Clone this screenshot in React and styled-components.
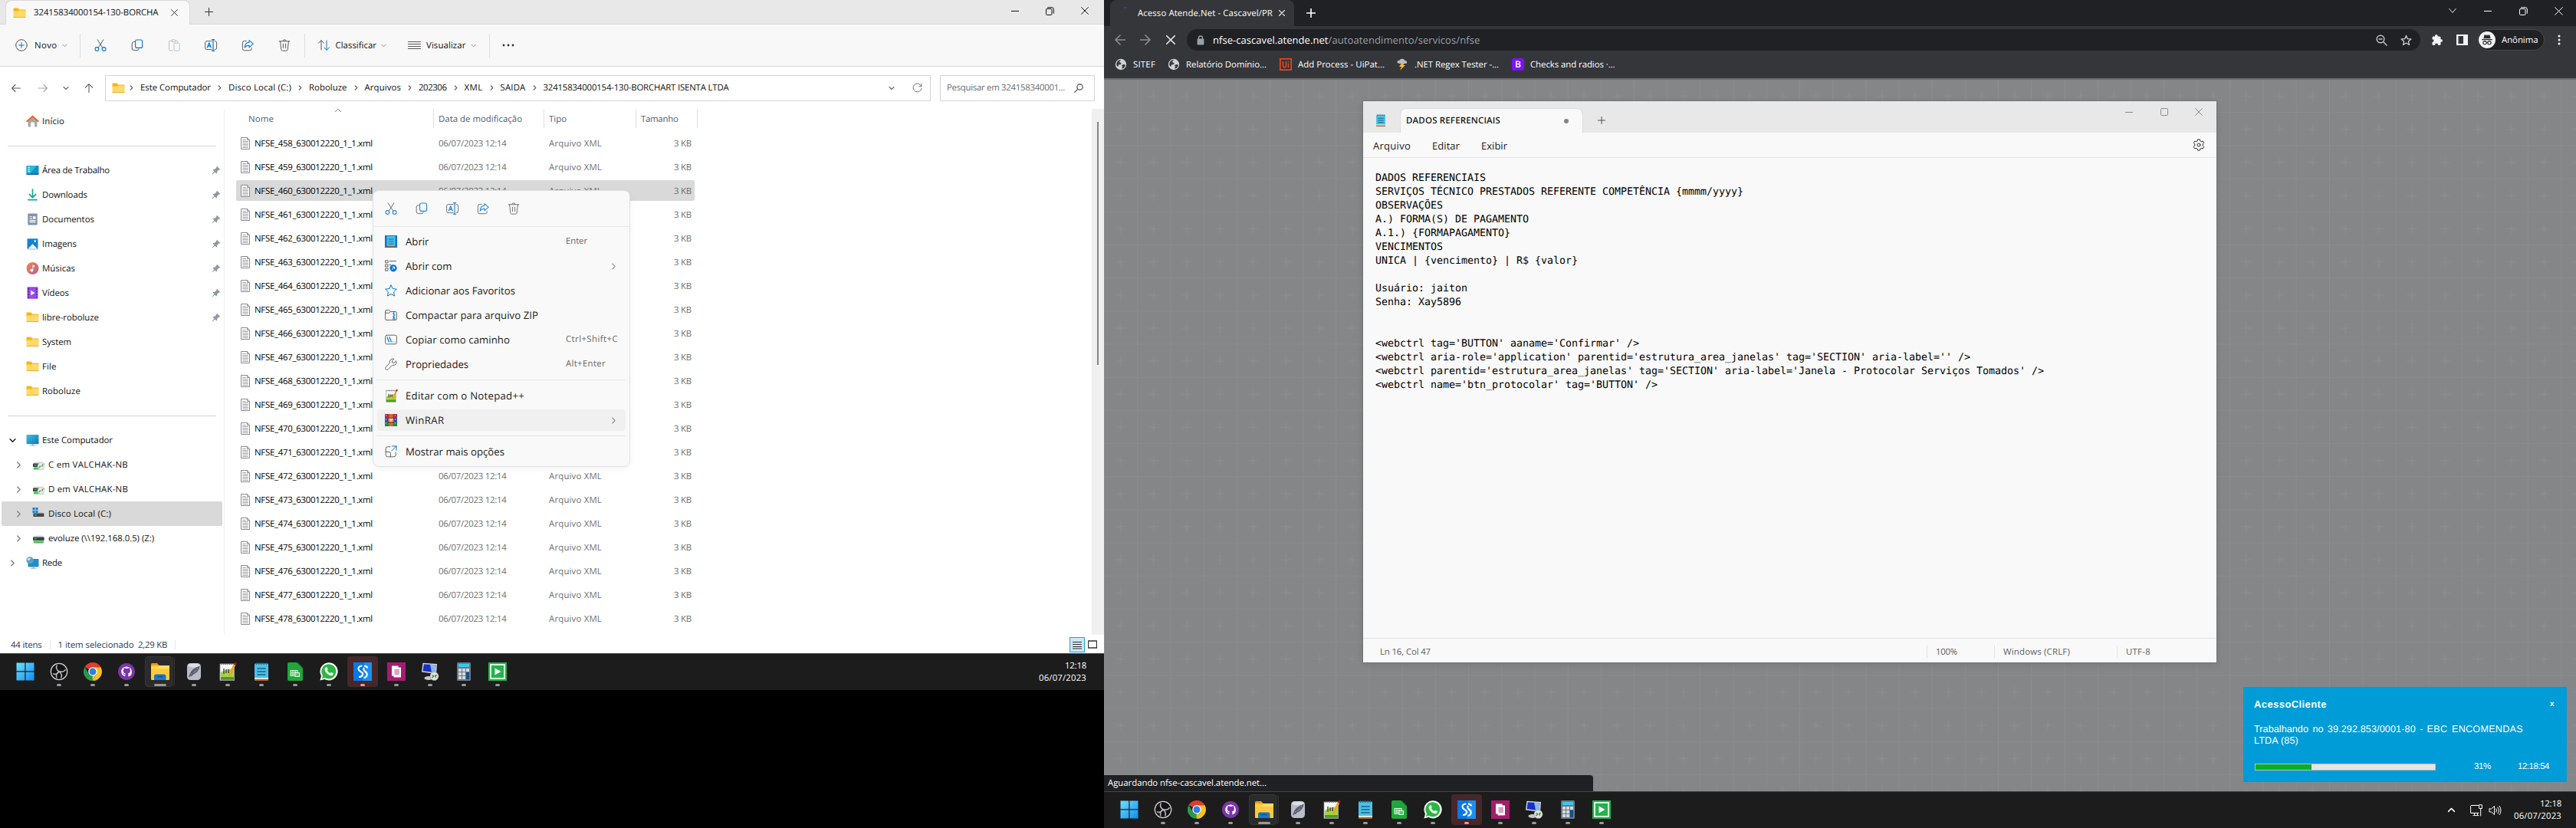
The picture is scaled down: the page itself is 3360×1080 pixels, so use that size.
import React, { useLayoutEffect, useRef, useState } from 'react';
import styled, { createGlobalStyle, css } from 'styled-components';

const UI = '"Open Sans", "Noto Sans", sans-serif';

const Global = createGlobalStyle`
  * { box-sizing: border-box; }
  html, body { margin: 0; padding: 0; background: #000; }
  body { width: 3360px; height: 1080px; overflow: hidden; font-family: ${UI}; font-size: 11.4px; text-rendering: geometricPrecision; }
  svg { display: block; flex: none; }
`;

/* ---------- text ---------- */
const Text = styled.span`
  display: inline-block;
  flex: none;
  width: max-content;
  white-space: pre;
  font-size: ${p => p.$s || 11.4}px;
  font-weight: ${p => p.$b || 400};
  color: ${p => p.$c || 'inherit'};
  line-height: ${p => p.$lh || 16}px;
  padding-top: ${p => (p.$lh ? 0 : 1)}px;
`;

/* Tracks a label so that it spans the given advance width. */
function Label({ w, s, c, b, lh, children }) {
  const ref = useRef(null);
  const [ls, setLs] = useState(0);
  useLayoutEffect(() => {
    if (!w) return;
    const natural = ref.current.getBoundingClientRect().width;
    setLs((w - natural) / String(children).length);
  }, []);
  return <Text ref={ref} $s={s} $c={c} $b={b} $lh={lh} style={ls ? { letterSpacing: ls + 'px' } : undefined}>{children}</Text>;
}

/* ---------- primitives ---------- */
const Slot = styled.div`
  width: ${p => p.$w}px;
  flex: none;
  display: flex;
  align-items: center;
  justify-content: ${p => p.$j || 'center'};
`;
const Gap = styled.div`flex: none; width: ${p => p.$w}px;`;
const Spacer = styled.div`flex: 1;`;
const VLine = styled.div`flex: none; width: 1px; height: ${p => p.$h}px; background: ${p => p.$c || '#dedede'};`;

const Desktop = styled.main`display: flex; width: 3360px; height: 1080px; background: #000; overflow: hidden;`;
const LeftScreen = styled.section`width: 1440px; height: 900px; display: flex; flex-direction: column; position: relative; background: #fff;`;
const RightScreen = styled.section`width: 1920px; height: 1080px; display: flex; flex-direction: column; position: relative;`;

/* ---------- line icons ---------- */
const S = ({ w = 16, h, vb, children, sw = 1, c = 'currentColor' }) => (
  <svg width={w} height={h || w} viewBox={vb || `0 0 ${w} ${h || w}`} fill="none" stroke={c} strokeWidth={sw} strokeLinecap="round" strokeLinejoin="round">{children}</svg>
);
const Chev = ({ d = 'down', c = '#777', z = 8, sw = 1.1 }) => (
  <S w={z} vb="0 0 8 8" c={c} sw={sw}>
    <path d={{ down: 'M1 2.5L4 5.5L7 2.5', right: 'M2.5 1L5.5 4L2.5 7', up: 'M.5 5.7L4 2.2L7.5 5.7' }[d]} />
  </S>
);
const Cross = ({ z = 10, c = '#222', sw = 1 }) => <S w={z} vb="0 0 10 10" c={c} sw={sw}><path d="M.6 .6L9.4 9.4M9.4 .6L.6 9.4" /></S>;
const Plus = ({ z = 11, c = '#333', sw = 1 }) => <S w={z} vb="0 0 11 11" c={c} sw={sw}><path d="M5.5 .5V10.5M.5 5.5H10.5" /></S>;
const Minus = ({ c = '#111' }) => <S w={10} vb="0 0 10 10" c={c}><path d="M0 5.5H10" /></S>;
const Restore = ({ c = '#111' }) => <S w={11} vb="0 0 11 11" c={c}><rect x=".5" y="2.5" width="7.5" height="8" rx="1.2" /><path d="M2.6 .7H8.2Q10.3 .7 10.3 3V8.3" /></S>;
const BLUE = '#0078d4';
const Cut = () => <S w={16} c="#5c5c5c"><path d="M4.2 .8L10.6 11M11.8 .8L5.4 11" /><circle cx="3.4" cy="13" r="2.4" stroke={BLUE} strokeWidth="1.1" /><circle cx="12.6" cy="13" r="2.4" stroke={BLUE} strokeWidth="1.1" /></S>;
const Copy = () => <S w={16} c="#5c5c5c"><path d="M4.6 3.6H3.6Q1.2 3.6 1.2 6V12Q1.2 14.6 3.8 14.6H8Q10 14.6 10.2 12.8" /><rect x="5.6" y="1" width="9" height="10.4" rx="2" stroke={BLUE} strokeWidth="1.1" /></S>;
const Paste = () => <S w={16} c="#bdbdbd"><path d="M5 2.2H3Q1.6 2.2 1.6 3.6V13.6Q1.6 15 3 15H6M10 2.2H11.4Q12.8 2.2 12.8 3.6V4.4" /><rect x="5" y=".8" width="5" height="2.8" rx="1.2" /><rect x="8" y="5.2" width="7.2" height="10" rx="1.4" stroke="#9fcbee" /></S>;
const Rename = () => <S w={18} h={16} c="#5c5c5c"><path d="M10 2.6H4Q1.6 2.6 1.6 5V11.2Q1.6 13.6 4 13.6H10M14 2.6H14.4Q16.6 2.6 16.6 5V11.2Q16.6 13.6 14.4 13.6H14" /><path d="M4.4 11L6.8 4.8L9.2 11M5.2 9H8.4" stroke={BLUE} strokeWidth="1.3" /><path d="M12 .8V15.2M10.4 .7H13.6M10.4 15.3H13.6" stroke={BLUE} strokeWidth="1.2" /></S>;
const Share = () => <S w={16} c="#5c5c5c"><path d="M6.2 2.4H3.6Q1.4 2.4 1.4 4.8V12.4Q1.4 14.8 3.6 14.8H10.8Q13.2 14.8 13.2 12.4V11.6" /><path d="M10 1.6L15.2 6.2L10 10.8V8.2Q6.2 8 4.2 11Q4.6 4.6 10 4.2Z" stroke={BLUE} strokeWidth="1.1" /></S>;
const Trash = () => <S w={16} c="#5c5c5c"><path d="M1.2 2.8H14.8M5.8 2.6Q6 .8 8 .8Q10 .8 10.2 2.6M2.6 3L3.8 13.6Q4 15.2 5.4 15.2H10.6Q12 15.2 12.2 13.6L13.4 3M6.4 6.2V11.6M9.6 6.2V11.6" /></S>;

/* ---------- colour icons ---------- */
const Folder = () => (
  <svg width="17" height="16" viewBox="0 0 17 16"><path d="M.5 2.6Q.5 1.5 1.6 1.5H6.4L8.4 3.6H15.4Q16.5 3.6 16.5 4.6V7H.5Z" fill="#f5b70f" /><path d="M.5 5.6H6.6L8.6 4.4H16.5V13Q16.5 14 15.5 14H1.5Q.5 14 .5 13Z" fill="#ffd96a" /><path d="M.5 12.4V13Q.5 14 1.5 14H15.5Q16.5 14 16.5 13V12.4Q16.5 13.2 15.5 13.2H1.5Q.5 13.2 .5 12.4Z" fill="#e6a21b" /></svg>
);
const Home = () => (
  <svg width="17" height="16" viewBox="0 0 17 16"><path d="M2.6 6.5L8.5 2L14.4 6.5V15Q14.4 15.5 13.8 15.5H11V11Q11 9.6 9.6 9.6H7.4Q6 9.6 6 11V15.5H3.2Q2.6 15.5 2.6 15Z" fill="#a8a8a8" /><path d="M1.2 8.2L8.5 1.6L15.8 8.2" fill="none" stroke="#e0671b" strokeWidth="1.9" strokeLinecap="round" strokeLinejoin="round" /></svg>
);
const DesktopIc = () => (
  <svg width="17" height="16" viewBox="0 0 17 16"><rect x=".5" y="2" width="16" height="12" rx="1" fill="#1492c8" /><path d="M.5 3Q.5 2 1.5 2H14L4 14H1.5Q.5 14 .5 13Z" fill="#2db7d9" /><path d="M3 4.5h1.6M3 7h1.6M3 9.5h1.6" stroke="#fff" strokeWidth="1.4" /><path d="M.5 12.4h16V13q0 1-1 1H1.5q-1 0-1-1Z" fill="#0b5f9b" /></svg>
);
const DownIc = () => <S w={17} h={16} c="#1aa98c" sw={1.7}><path d="M8.5 1V11.4M4.4 7.6L8.5 11.6L12.6 7.6M3 14.6H14" /></S>;
const DocIc = () => (
  <svg width="17" height="16" viewBox="0 0 17 16"><rect x="2.3" y=".6" width="12.4" height="15" rx="1" fill="#8094ad" /><path d="M4.6 4.8H8M4.6 7.2H8M4.6 9.6H12.4M4.6 11.6H12.4" stroke="#fff" strokeWidth="1.1" /><rect x="9" y="4.2" width="3.6" height="3.4" fill="#fff" /></svg>
);
const ImgIc = () => (
  <svg width="17" height="16" viewBox="0 0 17 16"><rect x="1.5" y="1.2" width="14" height="14" rx="1.2" fill="#1283d6" /><path d="M2.2 14.8L8.6 8.2L15 14.8Z" fill="#f2faff" /><circle cx="11.8" cy="4.6" r="1.4" fill="#fff" /></svg>
);
const MusicIc = () => (
  <svg width="17" height="16" viewBox="0 0 17 16"><defs><linearGradient id="mus" x1="0" y1="0" x2="1" y2="1"><stop offset="0" stopColor="#f08a4b" /><stop offset="1" stopColor="#b85f98" /></linearGradient></defs><circle cx="8.5" cy="8" r="8" fill="url(#mus)" /><circle cx="7.4" cy="10.6" r="1.9" fill="#fff" /><path d="M8.5 10.8V3.4L11 4.6V6.6L9.3 5.8V10.8Z" fill="#fff" /></svg>
);
const VideoIc = () => (
  <svg width="17" height="16" viewBox="0 0 17 16"><rect x="1.5" y=".2" width="14" height="15.6" rx="1" fill="#9a4be6" /><path d="M3.2 2V14.4M13.8 2V14.4" stroke="#4b1b95" strokeWidth="1.6" strokeDasharray="1.7 2" /><path d="M6.2 4.8L11.4 8L6.2 11.2Z" fill="#fff" /></svg>
);
const PcIc = () => (
  <svg width="17" height="16" viewBox="0 0 17 16"><defs><linearGradient id="pc" x1="0" y1="0" x2="1" y2="1"><stop offset="0" stopColor="#3cc3dd" /><stop offset="1" stopColor="#1272bd" /></linearGradient></defs><rect x=".5" y="1" width="16" height="12.2" rx=".8" fill="url(#pc)" /><path d="M7.6 13.2H9.6V14.8H12.4V15.6H4.8V14.8H7.6Z" fill="#9aa6ae" /></svg>
);
const NetIc = () => (
  <svg width="17" height="16" viewBox="0 0 17 16"><rect x="2.5" y="3" width="14" height="10.4" rx=".8" fill="#1d8fd0" /><path d="M8.6 13.4H10.6V15H13.4V15.8H5.8V15H8.6Z" fill="#9aa6ae" /><circle cx="5" cy="4.8" r="4.6" fill="#5f9fc6" /><path d="M2 2.2Q5 1 6 3Q4.6 5.6 2.2 5Z" fill="#cfe5ef" /></svg>
);
const NetDrive = ({ badge }) => (
  <svg width="17" height="16" viewBox="0 0 17 16"><path d="M3 4.4H13.5L15.6 7H1Z" fill="#dcdfe0" /><rect x="1" y="6.6" width="14.6" height="4.4" rx=".6" fill="#3b4145" /><rect x="3.2" y="8" width="2.2" height="1.4" fill="#3bdc6b" /><path d="M1.8 11.4H15V13.4Q15 14.6 14 14.6H2.8Q1.8 14.6 1.8 13.4Z" fill="#43c653" />{badge && <g><circle cx="11.6" cy="10" r="4.6" fill="#e8eae8" stroke="#b9bdb9" strokeWidth=".5" /><path d="M8.8 12.2L10.6 10.4L9.6 9.6M14.4 7.6L12.6 9.4L13.6 10.4" fill="none" stroke="#43973c" strokeWidth="1.2" /></g>}</svg>
);
const LocalDrive = () => (
  <svg width="17" height="16" viewBox="0 0 17 16"><path d="M.5 0H3.6V3.2H.5ZM4.4 0H7.5V3.2H4.4ZM.5 4H3.6V7.2H.5ZM4.4 4H7.5V7.2H4.4Z" fill="#1184d8" /><path d="M8 5.6H13.4L15.4 8H1.6V7.6H8Z" fill="#c7cacc" /><rect x="1.4" y="7.6" width="14" height="4.4" rx=".6" fill="#43484b" /><rect x="3.6" y="9" width="2" height="1.3" fill="#3bdc6b" /></svg>
);
const Pin = () => (
  <svg width="12" height="12" viewBox="0 0 12 12"><path d="M7 .8L11.2 5L10 5.8L9.4 5.6L7.2 7.8L7 9.8L6.2 10.4L4.2 8.4L1.2 11.2L.6 10.8L3.4 7.6L1.6 5.8L2.2 5L4.2 4.8L6.4 2.6L6.2 2Z" fill="#8d98a3" /></svg>
);
const FileIc = () => (
  <svg width="12" height="16" viewBox="0 0 12 16"><path d="M.5 .5H8.6L11.5 3.4V15.5H.5Z" fill="#fff" stroke="#8b8b8b" /><path d="M8.4 .5V3.6H11.5" fill="none" stroke="#8b8b8b" /><path d="M2.2 3.5H6.8M2.2 5.5H9.8M2.2 7.5H9.8M2.2 9.5H9.8M2.2 11.5H9.8M2.2 13.5H9.8" stroke="#a4a4a4" /></svg>
);
const NotePadIc = ({ w = 18, h = 24 }) => (
  <svg width={w} height={h} viewBox="0 0 18 24"><rect x="0" y="1.6" width="18" height="20.4" rx="1" fill="#4fc0e4" /><path d="M0 20H18V22.2H0Z" fill="#d9e8ee" /><path d="M0 22H18V23.2Q18 24 17 24H1Q0 24 0 23.2Z" fill="#b5611c" /><path d="M2.6 .2V3M5.8 .2V3M9 .2V3M12.2 .2V3M15.4 .2V3" stroke="#1b6d8f" strokeWidth="1.4" /><path d="M3.4 8H14.6M3.4 12H14.6M3.4 16H14.6" stroke="#14668c" strokeWidth="1.6" /></svg>
);
const NppIc = ({ z = 24 }) => (
  <svg width={z} height={z} viewBox="0 0 24 24"><rect x="2" y="2" width="18.6" height="21.4" fill="#fafafa" stroke="#9a9a9a" strokeWidth=".8" /><path d="M3 13Q9 9 20 8V22.8H3Z" fill="#a6d43e" /><path d="M3 19H20V22.8H3Z" fill="#4a9a2c" /><path d="M3.6 2H19" stroke="#666" strokeWidth="2" strokeDasharray="1.2 1.4" /><path d="M7 8V15M10 9V14M13 9V14" stroke="#444" strokeWidth="1.4" /><path d="M21.2 2.2L14 18" stroke="#eea42a" strokeWidth="3" /><path d="M22.6 .4L21.2 3.4" stroke="#96201c" strokeWidth="3" /></svg>
);

/* ---------- taskbar icons ---------- */
const TB = {
  win: <svg width="24" height="24" viewBox="0 0 24 24"><defs><linearGradient id="wn" x1="0" y1="0" x2="1" y2="1"><stop offset="0" stopColor="#6fe0ff" /><stop offset="1" stopColor="#0f8df0" /></linearGradient></defs><path d="M.5 .5H11.3V11.3H.5ZM12.5 .5H23.5V11.3H12.5ZM.5 12.5H11.3V23.5H.5ZM12.5 12.5H23.5V23.5H12.5Z" fill="url(#wn)" /></svg>,
  obs: <svg width="24" height="24" viewBox="0 0 24 24"><circle cx="12" cy="12" r="10.7" fill="#141216" stroke="#cfcfcf" strokeWidth="1.3" /><path d="M9.4 3.6Q6.6 8.6 12.2 11.8Q18.4 13.4 20.4 9.2M12.2 11.8Q7 14.8 9 20.2M12.2 11.8Q17 15.6 14.6 20.4M4.2 14.6Q8.4 17.2 12.2 11.8" fill="none" stroke="#b9b9b9" strokeWidth="1.5" /></svg>,
  chrome: <svg width="24" height="24" viewBox="0 0 24 24"><path d="M12 12L1.6 6A12 12 0 0 1 22.4 6H12Z" fill="#e33b2e" /><path d="M12 6.2H22.5A12 12 0 0 1 12 24L17 15Z" fill="#fcc31e" /><path d="M1.6 6L6.8 15Q9 18 13.6 17.8L12 24A12 12 0 0 1 1.6 6Z" fill="#259b48" /><path d="M12 17L17.300 14.500L12 24Q11 20 12 17Z" fill="#fcc31e" /><circle cx="12" cy="12" r="5.8" fill="#fff" /><circle cx="12" cy="12" r="4.5" fill="#2f7de9" /></svg>,
  github: <svg width="24" height="24" viewBox="0 0 24 24"><circle cx="12" cy="12" r="11" fill="#7c35a8" /><path d="M12 5.4C8 5.4 5.2 8.2 5.2 11.9c0 3 2 5.4 4.7 6.3.3 0 .5-.2.5-.4v-1.6c-2 .4-2.5-.9-2.5-.9-.9-1.6-1.2-1.2-.6-1.3.8 0 1.2.8 1.2.8.7 1.2 1.6.9 2 .7l.4-.9c-1.6-.3-3.2-.9-3.2-3.5 0-.8.3-1.5.8-2-.2-.4-.3-1 .1-2 0 0 .7-.2 2 .8a8 8 0 0 1 3.5 0c1.4-1 2-.8 2-.8.4 1 .2 1.6.1 2 .5.5.8 1.200.8 2 0 2.600-1.600 3.200-3.200 3.500.3.3.6.7.6 1.500v2c0 .2.100.4.5.4A6.700 6.700 0 0 0 18.900 11.900C18.900 8.200 16 5.400 12 5.400Z" fill="#fff" /></svg>,
  explorer: <svg width="26" height="24" viewBox="0 0 26 24"><path d="M1 2.600Q1 1 2.600 1H9L11.500 4H1Z" fill="#e79c12" /><path d="M1 4H24Q25 4 25 5V22Q25 23 24 23H2Q1 23 1 22Z" fill="#ffca3c" /><path d="M1 6.500H9.500L12 4H25V8H1Z" fill="#ffda68" /><path d="M5 23V18Q5 15.500 7.500 15.500H18Q20.500 15.500 20.500 18V23Z" fill="#1878c9" /><path d="M8.500 18.500H17" stroke="#0d539c" strokeWidth="1.500" /></svg>,
  feather: <svg width="24" height="24" viewBox="0 0 24 24"><rect x="3" y="1" width="18" height="22" rx="4.500" fill="#b9bccb" /><ellipse cx="12" cy="4" rx="7.500" ry="2.500" fill="#dcdee8" /><path d="M6 19Q8 9 18.500 6Q17 13 8.500 16M9 14L16 8.500M6 17H10" fill="none" stroke="#585c68" strokeWidth="1.600" /></svg>,
  npp: <NppIc />,
  note: <NotePadIc />,
  calc: <svg width="24" height="24" viewBox="0 0 24 24"><path d="M2 2Q2 0 4 0H14L22 8V22Q22 24 20 24H4Q2 24 2 22Z" fill="#21a63c" /><path d="M14 0H22V8Z" fill="#0c7d28" /><path d="M15.500 0L22 6.500V0Z" fill="#1c1c1c" /><path d="M6 10.500H15V17.500H6ZM6 13H15M6 15.200H15M9 10.500V17.500M12 10.500V17.500" fill="none" stroke="#d9f6dc" strokeWidth="1.100" /><rect x="12" y="13.500" width="5.500" height="5" fill="#4fcd62" stroke="#d9f6dc" /></svg>,
  whats: <svg width="24" height="24" viewBox="0 0 24 24"><path d="M.4 23.600L2 17.700A11.600 11.600 0 1 1 6.400 22Z" fill="#f5fff6" /><path d="M2.900 21.100L4 17.200A9.500 9.500 0 1 1 7 20Z" fill="#2cb742" /><path d="M8 6.500Q9 5.800 9.700 6.600L10.600 8.600Q10.700 9.300 9.700 10.300Q11 13 13.900 14.300Q15 12.900 15.500 13L17.900 14.200Q18.200 16.400 15.700 17.200Q13.500 17.600 10 14.900Q6.500 11.400 6.500 9Q6.600 7.500 8 6.500Z" fill="#fff" /></svg>,
  sblue: <svg width="24" height="24" viewBox="0 0 24 24"><rect width="24" height="24" fill="#0878e6" /><path d="M14 0H24V24H12Z" fill="#1c8ff0" /><path d="M11.500 4.500Q6 5 6.500 8.500Q7 11 10 12.500Q13 14 11.500 17Q10.500 19 7 19M14 4.500Q18 5 18 7.500M14 7Q12 9.500 15 11.500Q18.500 14 17.500 17Q16.500 20 13.500 20" fill="none" stroke="#fff" strokeWidth="2.200" /></svg>,
  doc: <svg width="24" height="24" viewBox="0 0 24 24"><rect width="24" height="24" fill="#a41c6f" /><path d="M6 4.500H14.500V6.500H18V19.500H8.500V17.500H6Z" fill="#fff" /><path d="M9.500 10H16M9.500 12.500H16M9.500 15H16" stroke="#a41c6f" strokeWidth="1" /></svg>,
  remote: <svg width="24" height="24" viewBox="0 0 24 24"><path d="M2.500 .8L21 2L20 15L1 12.500Z" fill="#d5d8dc" /><path d="M3.800 2.200L19.500 3.200L18.500 13.300L2.500 11.300Z" fill="#1530c2" /><path d="M12 2.800L19.500 3.200L18.500 13.300L14 12.700Z" fill="#8fb4f2" /><ellipse cx="10" cy="20.500" rx="5.500" ry="2.500" fill="#c9c9c9" /><circle cx="17.500" cy="18" r="5.500" fill="#dfe2df" stroke="#999" strokeWidth=".6" /><path d="M14.500 20L16.500 18L15 16.500M20.500 16L18.500 18L20 19.500" fill="none" stroke="#2f8a32" strokeWidth="1.400" /></svg>,
  calcu: <svg width="24" height="24" viewBox="0 0 24 24"><rect x="3" y="0" width="18" height="24" rx="1.500" fill="#6d7883" /><rect x="5" y="2" width="14" height="4" fill="#37c9f1" /><path d="M5 8H9V12H5ZM10 8H14V12H10ZM15 8H19V12H15ZM5 13H9V17H5ZM10 13H14V17H10ZM5 18H9V22H5ZM10 18H14V22H10Z" fill="#d3d9de" /><rect x="15" y="13" width="4" height="9" fill="#15508f" /></svg>,
  play: <svg width="24" height="24" viewBox="0 0 24 24"><rect width="24" height="24" fill="#24b24e" /><rect x="3" y="3" width="18" height="18" fill="none" stroke="#e9fbee" strokeWidth="1.800" /><path d="M8.500 7.500L16.500 12L8.500 16.500Z" fill="#fff" /></svg>,
};
const ORDER = ['win', 'obs', 'chrome', 'github', 'explorer', 'feather', 'npp', 'note', 'calc', 'whats', 'sblue', 'doc', 'remote', 'calcu', 'play'];

const TaskBar = styled.footer`height: 48px; flex: none; background: #1c1c1c; border-top: 1px solid #434543; display: flex; padding-left: 11px; color: #fff;`;
const TaskBtn = styled.div`
  width: 44px; height: 47px; flex: none; display: flex; align-items: center; justify-content: center; position: relative; background-clip: content-box; padding: 3px 2px 4px;
  &::before { content: ''; position: absolute; inset: 3px 2px 4px; border-radius: 4px; z-index: 0;
    ${p => p.$k === 'explorer' && css`background: #2b2b2b; border: 1px solid #363636; right: 6px; box-shadow: 3px 0 0 -1px #242424, 4px 0 0 -1px #333;`}
    ${p => p.$k === 'sblue' && css`background: #46282a;`} }
  &::after { content: ''; position: absolute; bottom: 5px; left: ${p => (p.$k === 'explorer' ? 14 : 19)}px; width: ${p => (p.$k === 'explorer' ? 16 : 6)}px; height: 3px; border-radius: 2px;
    background: ${p => (p.$k === 'win' ? 'transparent' : p.$k === 'sblue' ? '#ff8f98' : '#9a9a9a')}; }
  svg { position: relative; }
`;
const Clock = styled.div`display: flex; flex-direction: column; align-items: flex-end; padding-top: 8px; width: 75px; flex: none; margin-right: ${p => p.$r}px;`;

function Taskbar({ tray }) {
  return (
    <TaskBar>
      {ORDER.map(k => <TaskBtn key={k} $k={k}>{TB[k]}</TaskBtn>)}
      <Spacer />
      {tray && <>
        <Slot $w={20}><Chev d="up" c="#fff" z={9} sw={1.4} /></Slot>
        <Gap $w={11} />
        <Slot $w={24}><S w={16} c="#fff"><path d="M10.500 1.500H1.500Q.6 1.500 .6 2.500V11.500H11M4 14.600H11M5.500 11.800V14.400M9.500 11.800V14.400M12 .8H15.400V5.500H12ZM13.700 5.600V15" /></S></Slot>
        <Slot $w={24}><S w={17} h={16} c="#fff"><path d="M1 6V10H3.500L7.500 13.500V2.500L3.500 6ZM9.800 5.800Q11.500 8 9.800 10.200M12 4Q15 8 12 12M14.200 2.400Q18 8 14.200 13.600" /></S></Slot>
      </>}
      <Clock $r={tray ? 19 : 23}>
        <Label w={28} s={11.3} lh={16}>12:18</Label>
        <Label w={62} s={11.3} lh={16}>06/07/2023</Label>
      </Clock>
    </TaskBar>
  );
}

/* ---------- explorer ---------- */
const Explorer = styled.div`height: 852px; display: flex; flex-direction: column; background: #fff; color: #111;`;
const TitleBar = styled.div`height: 32px; flex: none; background: #e8e8e8; border-bottom: 1px solid #d9d9d9; display: flex; padding-left: 7px;`;
const ExTab = styled.div`width: 241px; height: 32px; background: #f8f8f8; border: 1px solid #d9d9d9; border-bottom: 0; border-radius: 8px 8px 0 0; display: flex; align-items: center; padding-left: 9px; flex: none;`;
const TabClip = styled.div`width: 163px; overflow: hidden; display: flex; flex: none;`;
const Ctl = styled.div`display: flex; align-items: center; height: ${p => p.$h || 28}px; color: ${p => p.$c || '#111'};`;
const ToolBar = styled.div`height: 55px; flex: none; background: #f8f8f8; border-bottom: 1px solid #d6d6d6; display: flex; align-items: center; padding-left: 19px;`;
const AddressRow = styled.div`height: 55px; flex: none; display: flex; align-items: center; padding: 0 12px 0 4px;`;
const Box = styled.div`height: 34px; width: ${p => p.$w}px; flex: none; border: 1px solid #d5d5d5; display: flex; align-items: center; background: #fff;`;
const ExBody = styled.div`flex: 1; display: flex; min-height: 0;`;
const Side = styled.nav`width: 293px; flex: none; border-right: 1px solid #efefef;`;
const SideRow = styled.div`
  height: 32px; margin: 0 2px 0 2px; padding-left: ${p => 10 + (p.$in ? 8 : 0)}px; display: flex; align-items: center; border-radius: 2px;
  background: ${p => (p.$sel ? '#d9d9d9' : 'transparent')};
`;
const SideRule = styled.div`height: 1px; background: #d4d4d4; margin: ${p => p.$m} 10px ${p => p.$m2} 10px;`;
const Files = styled.div`width: 1131px; flex: none;`;
const Head = styled.div`height: 31px; display: flex; padding-left: 15px; color: #4c607a;`;
const HeadCell = styled.div`width: ${p => p.$w}px; height: 25px; flex: none; border-right: 1px solid #dfdfdf; padding: 5px 0 0 ${p => p.$p}px; position: relative;`;
const SortMark = styled.div`position: absolute; left: 129px; top: -2px;`;
const FileRow = styled.div`
  margin: 0 0 4px 15px; width: 598px; height: 27px; display: grid; grid-template-columns: 6px 18px 240px 144px 1fr; align-items: center; padding-right: 4px; border-radius: 2px; padding-top: 1px;
  background: ${p => (p.$sel ? '#d9d9d9' : 'transparent')}; color: #707070;
`;
const Right = styled.div`display: flex; justify-content: flex-end;`;
const Scroll = styled.div`width: 16px; background: #f0f0f0; flex: none; padding: 17px 0 0 7px;`;
const Thumb = styled.div`width: 2px; height: 317px; background: #868686;`;
const Status = styled.div`height: 24px; flex: none; display: flex; align-items: center; padding-left: 14px; color: #1e395b; padding-top: 2px;`;
const ViewBtn = styled.div`width: 20px; height: 20px; flex: none; display: flex; align-items: center; justify-content: center; ${p => p.$on && css`background: #cce8f5; border: 1px solid #26a0da;`}`;

const QUICK = [
  ['Área de Trabalho', 88, <DesktopIc />, 1], ['Downloads', 59, <DownIc />, 1], ['Documentos', 68, <DocIc />, 1], ['Imagens', 45, <ImgIc />, 1],
  ['Músicas', 43, <MusicIc />, 1], ['Vídeos', 35, <VideoIc />, 1], ['libre-roboluze', 74, <Folder />, 1], ['System', 38, <Folder />, 0], ['File', 18.500, <Folder />, 0], ['Roboluze', 50, <Folder />, 0],
];
const TREE = [
  ['Este Computador', 92, <PcIc />, 0, 'down'], ['C em VALCHAK-NB', 104, <NetDrive badge />, 1, 'right'], ['D em VALCHAK-NB', 104, <NetDrive badge />, 1, 'right'],
  ['Disco Local (C:)', 82, <LocalDrive />, 1, 'right'], ['evoluze (\\\\192.168.0.5) (Z:)', 138, <NetDrive />, 1, 'right'], ['Rede', 26, <NetIc />, 0, 'right'],
];
const CRUMBS = [['Este Computador', 92], ['Disco Local (C:)', 82], ['Roboluze', 49.500], ['Arquivos', 47.500], ['202306', 36.500], ['XML', 24], ['SAIDA', 33], ['32415834000154-130-BORCHART ISENTA LTDA', 242]];

function ExplorerWindow() {
  return (
    <Explorer>
      <TitleBar>
        <ExTab>
          <Folder /><Gap $w={10} /><TabClip><Label w={216}>32415834000154-130-BORCHART ISENTA</Label></TabClip>
          <Slot $w={40}><Cross z={9} /></Slot>
        </ExTab>
        <Slot $w={48}><Plus z={11} /></Slot>
        <Spacer />
        <Ctl><Slot $w={45}><Minus /></Slot><Slot $w={46}><Restore /></Slot><Slot $w={46}><Cross z={10} c="#111" /></Slot></Ctl><Gap $w={2} />
      </TitleBar>
      <ToolBar>
        <Slot $w={18}><S w={16} c="#555"><circle cx="8" cy="8" r="7.300" /><path d="M8 4.600V11.400M4.600 8H11.400" stroke={BLUE} /></S></Slot>
        <Gap $w={8} /><Label w={29.500}>Novo</Label><Slot $w={19}><Chev c="#8a8a8a" z={7} /></Slot>
        <Gap $w={10} /><VLine $h={31} /><Gap $w={2} />
        {[<Cut />, <Copy />, <Paste />, <Rename />, <Share />, <Trash />].map((x, i) => <Slot key={i} $w={48}>{x}</Slot>)}
        <Gap $w={2} /><VLine $h={31} /><Gap $w={16} />
        <S w={17} h={16} c="#555"><path d="M5 14V1.800M1.500 5.200L5 1.600L8.500 5.200" /><path d="M12 2V14.200M8.800 11L12 14.400L15.500 11" stroke={BLUE} /></S>
        <Gap $w={7} /><Label w={53.500}>Classificar</Label><Slot $w={19}><Chev c="#8a8a8a" z={7} /></Slot>
        <Gap $w={22} /><S w={17} h={16} c="#444"><path d="M.5 3.500H16.500M.5 6.500H16.500M.5 9.500H16.500M.5 12.500H16.500" strokeWidth=".9" /></S>
        <Gap $w={7} /><Label w={51.500}>Visualizar</Label><Slot $w={19}><Chev c="#8a8a8a" z={7} /></Slot>
        <Gap $w={11} /><VLine $h={31} /><Gap $w={15} />
        <svg width="18" height="4" viewBox="0 0 18 4"><circle cx="3" cy="2" r="1.400" fill="#333" /><circle cx="9" cy="2" r="1.400" fill="#333" /><circle cx="15" cy="2" r="1.400" fill="#333" /></svg>
      </ToolBar>
      <AddressRow>
        <Slot $w={34}><S w={12} c="#5f5f5f" sw={1.100}><path d="M11.500 6H.8M5 1.500L.6 6L5 10.500" /></S></Slot>
        <Slot $w={36}><S w={12} c="#a5a5a5" sw={1.100}><path d="M.5 6H11.200M7 1.500L11.400 6L7 10.500" /></S></Slot>
        <Slot $w={24}><Chev z={8} c="#666" /></Slot>
        <Slot $w={36}><S w={12} c="#5f5f5f" sw={1.100}><path d="M6 11.500V.8M1.200 5.400L6 .6L10.800 5.400" /></S></Slot>
        <Gap $w={3} />
        <Box $w={1077}>
          <Gap $w={8} /><Folder />
          {CRUMBS.map(([t, w], i) => <React.Fragment key={t}><Slot $w={i ? 23 : 17}><Chev d="right" z={7} c="#555" sw={1.300} /></Slot>{i === 0 && <Gap $w={3} />}<Label w={w}>{t}</Label></React.Fragment>)}
          <Spacer /><Slot $w={30}><Chev z={8} c="#666" /></Slot><Gap $w={5} />
          <Slot $w={26}><S w={13} c="#777"><path d="M11.800 4.600A5.500 5.500 0 1 0 12 7.600M12 1.200V4.800H8.600" /></S></Slot><Gap $w={4} />
        </Box>
        <Gap $w={12} />
        <Box $w={202}>
          <Gap $w={8} /><Label w={154} c="#6d6d6d">Pesquisar em 324158340001...</Label><Gap $w={12} />
          <S w={12} c="#6a6a6a" sw={1.400}><circle cx="7.500" cy="4.500" r="3.700" /><path d="M4.800 7.200L.8 11.200" /></S>
        </Box>
      </AddressRow>
      <ExBody>
        <Side>
          <SideRow><Gap $w={22} /><Home /><Gap $w={4} /><Label w={29}>Início</Label></SideRow>
          <SideRule $m="16px" $m2="15px" />
          {QUICK.map(([t, w, ic, pin]) => (
            <SideRow key={t}><Gap $w={22} />{ic}<Gap $w={4} /><Label w={w}>{t}</Label><Spacer />{!!pin && <Pin />}<Gap $w={2} /></SideRow>
          ))}
          <SideRule $m="16px" $m2="15px" />
          {TREE.map(([t, w, ic, inn, ch], i) => (
            <SideRow key={t} $in={inn} $sel={i === 3}><Slot $w={9}><Chev d={ch} z={9} c={ch === 'down' ? '#222' : '#8c8c8c'} sw={1.400} /></Slot><Gap $w={13} />{ic}<Gap $w={4} /><Label w={w}>{t}</Label></SideRow>
          ))}
        </Side>
        <Files>
          <Head>
            <HeadCell $w={258} $p={16}><Label w={33}>Nome</Label><SortMark><Chev d="up" z={8} c="#666" sw={0.9} /></SortMark></HeadCell>
            <HeadCell $w={144} $p={6}><Label w={109}>Data de modificação</Label></HeadCell>
            <HeadCell $w={120} $p={6}><Label w={23}>Tipo</Label></HeadCell>
            <HeadCell $w={80} $p={6}><Label w={48.500}>Tamanho</Label></HeadCell>
          </Head>
          {Array.from({ length: 21 }, (_, i) => 458 + i).map(n => (
            <FileRow key={n} $sel={n === 460}>
              <span /><FileIc />
              <Label w={154} c="#000">{`NFSE_${n}_630012220_1_1.xml`}</Label>
              <Label w={88.500}>06/07/2023 12:14</Label>
              <Right><Label w={69}>Arquivo XML</Label><Spacer /><Label w={23}>3 KB</Label></Right>
            </FileRow>
          ))}
        </Files>
        <Scroll><Thumb /></Scroll>
      </ExBody>
      <Status>
        <Label w={40.500}>44 itens</Label><Gap $w={10} /><VLine $h={12} $c="#e8e8e8" /><Gap $w={10} />
        <Label w={99}>1 item selecionado</Label><Gap $w={5.500} /><Label w={38}>2,29 KB</Label><Gap $w={10} /><VLine $h={12} $c="#e8e8e8" />
        <Spacer />
        <ViewBtn $on><S w={12} c="#333"><path d="M0 2.500H12M0 5.500H12M0 8.500H12" /><path d="M0 11H12" /></S></ViewBtn>
        <ViewBtn><S w={12} c="#333"><rect x=".5" y="1" width="11" height="9" strokeWidth="1.300" /></S></ViewBtn><Gap $w={5} />
      </Status>
    </Explorer>
  );
}

/* ---------- context menu ---------- */
const Menu = styled.div`position: absolute; left: 486px; top: 248px; width: 336px; height: 361px; background: #f9f9f9; border: 1px solid #e0e0e0; border-radius: 8px; box-shadow: 0 3px 8px rgba(0,0,0,.05); color: #1b1b1b; overflow: hidden;`;
const MenuIcons = styled.div`height: 47px; display: flex; align-items: center; padding-left: 3px; border-bottom: 1px solid #e6e6e6; opacity: .85;`;
const MenuGroup = styled.div`padding: ${p => p.$p || '3px 5px'};`;
const MenuRule = styled.div`height: 1px; background: #e6e6e6; margin: 0 4px;`;
const MenuItem = styled.div`height: 28px; margin-bottom: 4px; padding-left: 10px; border-radius: 4px; display: flex; align-items: center; background: ${p => (p.$hot ? '#f0f0f0' : 'transparent')};`;
const MenuLabel = styled.div`width: 209px; margin-left: 11px; flex: none; display: flex;`;

const Item = ({ icon, t, w, k, kw, arrow, hot }) => (
  <MenuItem $hot={hot}><Slot $w={16}>{icon}</Slot><MenuLabel><Label w={w} s={13.200} lh={20}>{t}</Label></MenuLabel>
    {k && <Label w={kw} s={11.400} lh={18} c="#676767">{k}</Label>}
    {arrow && <><Gap $w={58} /><Chev d="right" z={9} c="#777" sw={0.9} /></>}
  </MenuItem>
);
const OpenIc = <svg width="16" height="16" viewBox="0 0 16 16"><rect width="16" height="16" fill="#0a74cf" /><rect x="2.500" y="1" width="11" height="14" fill="#4fc0e4" /><path d="M4.500 5H11.500M4.500 8H11.500M4.500 11H11.500" stroke="#14668c" /><path d="M2.500 14.500H13.500" stroke="#a85a1c" /></svg>;
const OpenWith = <S w={16} c="#666"><rect x="1" y=".8" width="3" height="3" /><rect x="1" y="6" width="3" height="3" /><rect x="1" y="11.200" width="3" height="3" /><path d="M6 1.500H14.500M6 6.500H8" /><circle cx="11" cy="10.800" r="4.600" fill={BLUE} stroke="none" /><path d="M9.400 12.400L12.600 9.200M10.200 9.200H12.600V11.600" stroke="#fff" /></S>;
const StarIc = <S w={16} c={BLUE}><path d="M8 .8L10.200 5.500L15.400 6.200L11.600 9.800L12.500 15L8 12.500L3.500 15L4.400 9.800L.6 6.200L5.800 5.500Z" /></S>;
const ZipIc = <S w={16} c="#666"><path d="M9.500 3.500H7.500L5.800 1.600H2Q.6 1.600 .6 3V13Q.6 14.400 2 14.400H14Q15.400 14.400 15.400 13V5Q15.400 3.500 14 3.500M.6 5.200H5.600L7.500 3.500" /><path d="M10 3.500H13.500M11.800 3.500V12M10.500 6H12M11.800 8H13.200M10.500 10H12M11 14V11.500H12.800V14" stroke={BLUE} /></S>;
const PathIc = <S w={16} c="#666"><rect x=".6" y="2.200" width="14.800" height="11.600" rx="2" /><path d="M3 4.800L5.400 11M6 4.800L8.400 11M10.500 11H10.600M13 11H13.100" stroke={BLUE} strokeWidth="1.200" /></S>;
const WrenchIc = <S w={16} c="#666"><path d="M14.600 4.200L12 6.400L9.800 5.900L9.400 3.800L12 1.200Q8.600 0 6.800 2.800Q5.900 4.600 6.600 6.600L1.200 11.800Q-.2 13.800 1.400 15Q3 16 4.400 14.600L9.600 9.400Q13.400 10.200 14.900 7.200Q15.500 5.600 14.600 4.200Z" /></S>;
const RarIc = <svg width="16" height="16" viewBox="0 0 16 16"><rect width="16" height="5" fill="#b3264a" /><rect y="5" width="16" height="6" fill="#3a50b5" /><rect y="11" width="16" height="5" fill="#1f8a3c" /><path d="M5.500 0H10.500V16H5.500Z" fill="#d96a1e" /><rect x="4.500" y="5.500" width="7" height="5" fill="#f3f0ea" stroke="#8a2a10" /><path d="M6.500 9.500V7M9.500 9.500V7" stroke="#b32020" /><path d="M1.500 1V15M13.500 1V15" stroke="#e9c04a" strokeWidth=".8" strokeDasharray="2 3" /></svg>;
const MoreIc = <S w={16} c="#666"><path d="M7 1.800H3.500Q1.200 1.800 1.200 4.200V12.200Q1.200 14.800 3.700 14.800H11.700Q14.200 14.800 14.200 12.200V9" /><path d="M1.200 8.500H5.500Q7.400 8.500 7.400 10.400V14.800" /><path d="M9.500 .9H15V6.400M15 .9L9 6.900" stroke={BLUE} /></S>;

const ContextMenu = () => (
  <Menu>
    <MenuIcons>{[<Cut />, <Copy />, <Rename />, <Share />, <Trash />].map((x, i) => <Slot key={i} $w={40}>{x}</Slot>)}</MenuIcons>
    <MenuGroup $p="5px 5px 2px">
      <Item icon={OpenIc} t="Abrir" w={30.500} k="Enter" kw={28} />
      <Item icon={OpenWith} t="Abrir com" w={60.500} arrow />
      <Item icon={StarIc} t="Adicionar aos Favoritos" w={143} />
      <Item icon={ZipIc} t="Compactar para arquivo ZIP" w={173} />
      <Item icon={PathIc} t="Copiar como caminho" w={136} k="Ctrl+Shift+C" kw={68} />
      <Item icon={WrenchIc} t="Propriedades" w={82} k="Alt+Enter" kw={52} />
    </MenuGroup>
    <MenuRule />
    <MenuGroup $p="6px 5px 2px">
      <Item icon={<NppIc z={17} />} t="Editar com o Notepad++" w={155} />
      <Item icon={RarIc} t="WinRAR" w={50.500} arrow hot />
    </MenuGroup>
    <MenuRule />
    <MenuGroup $p="6px 5px"><Item icon={MoreIc} t="Mostrar mais opções" w={129} /></MenuGroup>
  </Menu>
);

/* ---------- chrome ---------- */
const TabStrip = styled.div`height: 34px; flex: none; background: #202124; display: flex; padding-left: 8px; color: #fff;`;
const ChTab = styled.div`width: 240px; height: 34px; background: #35363a; border-radius: 8px 8px 0 0; display: flex; align-items: center; padding-left: 36px; flex: none; position: relative;
  &::before { content: ''; position: absolute; left: 18px; top: 9px; width: 3px; height: 2px; background: #2f4a78; }`;
const ChBar = styled.div`height: 36px; flex: none; background: #35363a; display: flex; align-items: center; padding-left: 4px; color: #fff;`;
const Omni = styled.div`width: 1609px; height: 28px; border-radius: 14px; background: #202124; display: flex; align-items: center; flex: none;`;
const Pill = styled.div`width: 88px; height: 28px; border-radius: 14px; background: #202124; border: 1px solid #46474b; display: flex; align-items: center; padding-left: 1px; flex: none;`;
const Marks = styled.div`height: 34px; flex: none; background: #35363a; border-bottom: 2px solid #6b6c6e; display: flex; align-items: center; color: #fff; padding: 0 0 4px 14px;`;
const Page = styled.div`
  flex: 1; background-color: #858688;
  background-image: linear-gradient(90deg, #8b8c8e 1px, transparent 1px), linear-gradient(#8b8c8e 1px, transparent 1px),
    radial-gradient(ellipse 1px 11px at 50% 50%, #8e8f91, transparent), radial-gradient(ellipse 11px 1px at 50% 50%, #8e8f91, transparent);
  background-size: 43.200px 43.200px; background-position: 0 -1px, 0 -1px, 0 0, 0 0;
`;
const Bubble = styled.div`position: absolute; left: 0; top: 1011px; width: 638px; height: 21px; background: #202124; border-top-right-radius: 4px; color: #fff; padding: 2px 0 0 5px;`;

const Globe = () => <svg width="16" height="16" viewBox="0 0 16 16"><circle cx="8" cy="8" r="7.200" fill="#d0d2d5" /><path d="M8.500 2.200Q5.500 3 6.500 5.500L8.500 6L8 8L5 8.500L4.500 11L2.400 9.500Q1.600 5.600 4.400 3.200Q6.500 1.800 8.500 2.200ZM11.500 8L9 9L10 11L9 13.800Q13.500 12.800 14 8.500Z" fill="#3b3c40" /></svg>;
const UiIc = () => <svg width="16" height="16" viewBox="0 0 16 16"><rect x=".8" y=".8" width="14.400" height="14.400" fill="#35363a" stroke="#f0471c" strokeWidth="1.600" /><path d="M4.500 4V9.500Q4.500 11.800 6.500 11.800Q8.500 11.800 8.500 9.500V4M11.500 6.500V12M11.500 4V5" fill="none" stroke="#f0471c" strokeWidth="1.500" /></svg>;
const Storm = () => <svg width="16" height="16" viewBox="0 0 16 16"><path d="M7 6.500L4 11H7L5 15.800L12 9H9L11 6.500Z" fill="#f3c12b" /><path d="M3 6.500Q.8 6 1.500 4Q2.500 2.500 4 3Q5.500 .4 8.500 .8Q11 1.200 11.500 3Q14.500 3.200 14.200 5.500Q13.800 7 12 7H4Z" fill="#b9bcc1" /></svg>;
const BIcon = styled.div`width: 16px; height: 16px; border-radius: 3px; background: #7a14f5; color: #fff; font: 600 12px/16px ${UI}; text-align: center; flex: none;`;
const HatIc = () => <svg width="22" height="22" viewBox="0 0 22 22"><circle cx="11" cy="11" r="11" fill="#f1f3f4" /><path d="M7.600 4.200Q11 5.200 14.400 4.200L15.600 9.300H6.400Z" fill="#2a2b2e" /><path d="M4.200 10.600H17.800" stroke="#2a2b2e" strokeWidth="1.200" /><circle cx="8" cy="14.800" r="2.200" fill="none" stroke="#2a2b2e" strokeWidth="1.100" /><circle cx="14" cy="14.800" r="2.200" fill="none" stroke="#2a2b2e" strokeWidth="1.100" /><path d="M10.200 14.400H11.800" stroke="#2a2b2e" /></svg>;

const MARKS = [[<Globe />, 'SITEF', 29, 16], [<Globe />, 'Relatório Domínio...', 105, 17], [<UiIc />, 'Add Process - UiPat...', 113, 15], [<Storm />, '.NET Regex Tester -...', 110, 17], [<BIcon>B</BIcon>, 'Checks and radios ·...', 110.500, 0]];

function Chrome() {
  return (
    <>
      <TabStrip>
        <ChTab><Label w={176}>Acesso Atende.Net - Cascavel/PR</Label><Slot $w={24}><Cross z={8} c="#e3e3e3" sw={1.500} /></Slot></ChTab>
        <Slot $w={44}><Plus z={12} c="#fff" sw={1.500} /></Slot>
        <Spacer />
        <Ctl><Slot $w={46}><S w={10} c="#e8e8e8"><path d="M.8 2.500L5 7.500L9.200 2.500" /></S></Slot><Slot $w={46}><Minus c="#fff" /></Slot><Slot $w={46}><Restore c="#fff" /></Slot><Slot $w={46}><Cross z={11} c="#fff" sw={0.9} /></Slot></Ctl>
      </TabStrip>
      <ChBar>
        <Slot $w={34}><S w={14} c="#8b8c8f" sw={1.700}><path d="M13.500 7H1.200M7 1L1 7L7 13" /></S></Slot>
        <Slot $w={32}><S w={14} c="#8b8c8f" sw={1.700}><path d="M.5 7H12.800M7 1L13 7L7 13" /></S></Slot>
        <Slot $w={33}><Cross z={12} c="#f1f1f1" sw={1.300} /></Slot>
        <Gap $w={5} />
        <Omni>
          <Gap $w={13} />
          <svg width="10" height="13" viewBox="0 0 10 13"><rect x=".6" y="4.600" width="8.800" height="8" rx="1" fill="#9aa0a6" /><path d="M2.500 5V3.200Q2.500 1 5 1Q7.500 1 7.500 3.200V5" fill="none" stroke="#9aa0a6" strokeWidth="1.400" /></svg>
          <Gap $w={11} />
          <Label w={150.500} s={13} lh={18} c="#fff">nfse-cascavel.atende.net</Label><Label w={198} s={13} lh={18} c="#9aa0a6">/autoatendimento/servicos/nfse</Label>
          <Spacer />
          <S w={15} vb="0 0 15 15" c="#bfc1c5" sw={1.500}><circle cx="6" cy="6" r="4.800" /><path d="M9.800 9.800L14 14M4 6H8" /></S><Gap $w={17} />
          <S w={15} vb="0 0 16 16" c="#c9cbce" sw={1.400}><path d="M8 1.500L9.900 6L14.800 6.400L11.100 9.600L12.200 14.400L8 11.800L3.800 14.400L4.900 9.600L1.200 6.400L6.100 6Z" /></S><Gap $w={11} />
        </Omni>
        <Gap $w={14} />
        <svg width="16" height="16" viewBox="0 0 16 16"><path d="M1.500 5Q1.500 3.500 3 3.500H5V2.800Q5.200 1 6.800 1Q8.400 1 8.600 2.800V3.500H11Q12.500 3.500 12.500 5V7.200H13.200Q15 7.400 15 9Q15 10.600 13.200 10.800H12.500V13.500Q12.500 15 11 15H9Q9 12.600 7 12.600Q5 12.600 5 15H3Q1.500 15 1.500 13.500V11Q3.600 11 3.600 9Q3.600 7.200 1.500 7.200Z" fill="#f1f3f4" /></svg>
        <Gap $w={17} />
        <svg width="15" height="14" viewBox="0 0 15 14"><rect width="15" height="14" fill="#f1f3f4" /><rect x="2.500" y="2" width="6.500" height="10" fill="#35363a" /></svg>
        <Gap $w={12} />
        <Pill><HatIc /><Gap $w={8} /><Label w={47.500} c="#fff">Anônima</Label></Pill>
        <Gap $w={17} />
        <svg width="4" height="14" viewBox="0 0 4 14"><circle cx="2" cy="2" r="1.500" fill="#f1f1f1" /><circle cx="2" cy="7" r="1.500" fill="#f1f1f1" /><circle cx="2" cy="12" r="1.500" fill="#f1f1f1" /></svg>
      </ChBar>
      <Marks>
        {MARKS.map(([ic, t, w, g]) => <React.Fragment key={t}>{ic}<Gap $w={8} /><Label w={w}>{t}</Label><Gap $w={g} /></React.Fragment>)}
      </Marks>
    </>
  );
}

/* ---------- notepad ---------- */
const Notepad = styled.div`position: absolute; left: 338px; top: 132px; width: 1113px; height: 732px; background: #f9f9f9; color: #1b1b1b; display: flex; flex-direction: column; box-shadow: 0 0 0 1px rgba(80,80,80,.25), 0 2px 8px rgba(0,0,0,.12);`;
const NpTitle = styled.div`height: 41px; flex: none; background: #e8e8e8; display: flex;`;
const NpIcon = styled.div`width: 48px; height: 41px; flex: none; display: flex; align-items: center; justify-content: center; padding: 9px 2px 0 0;`;
const NpTab = styled.div`width: 239px; height: 32px; margin-top: 9px; flex: none; background: #f9f9f9; border: 1px solid #dcdcdc; border-bottom: 0; border-radius: 8px 8px 0 0; display: flex; align-items: center; padding-left: 7px;`;
const Dot = styled.div`width: 6px; height: 6px; border-radius: 50%; background: #858585; flex: none;`;
const NpMenu = styled.div`height: 33px; flex: none; border-bottom: 1px solid #e6e6e6; display: flex; align-items: center; padding-left: 13px;`;
const Body = styled.div`flex: 1; padding: 18px 0 0 16px; color: #000;`;
const Line = styled.div`height: 18px; font: 13.300px/18px "DejaVu Sans Mono", "Liberation Mono", monospace; white-space: pre; letter-spacing: -0.006px;`;
const NpStatus = styled.div`height: 32px; flex: none; border-top: 1px solid #e4e4e4; display: flex; align-items: center; padding: 3px 0 0 22px; color: #5c5c5c;`;
const NpPlus = styled.div`padding-top: 9px;`;
const NpCell = styled.div`width: ${p => p.$w}px; height: 16px; border-left: 1px solid #e2e2e2; padding-left: 11px; flex: none; display: flex; align-items: center;`;

const LINES = [
  'DADOS REFERENCIAIS', 'SERVIÇOS TÉCNICO PRESTADOS REFERENTE COMPETÊNCIA {mmmm/yyyy}', 'OBSERVAÇÕES', 'A.) FORMA(S) DE PAGAMENTO', 'A.1.) {FORMAPAGAMENTO}', 'VENCIMENTOS',
  'UNICA | {vencimento} | R$ {valor}', '', 'Usuário: jaiton', 'Senha: Xay5896', '', '',
  "<webctrl tag='BUTTON' aaname='Confirmar' />",
  "<webctrl aria-role='application' parentid='estrutura_area_janelas' tag='SECTION' aria-label='' />",
  "<webctrl parentid='estrutura_area_janelas' tag='SECTION' aria-label='Janela - Protocolar Serviços Tomados' />",
  "<webctrl name='btn_protocolar' tag='BUTTON' />",
];

const NotepadWindow = () => (
  <Notepad>
    <NpTitle>
      <NpIcon><NotePadIc w={12} h={16} /></NpIcon>
      <NpTab><Label w={123} s={11.500} b={600}>DADOS REFERENCIAIS</Label><Gap $w={83} /><Dot /></NpTab>
      <Slot $w={48}><NpPlus><Plus z={10} c="#444" /></NpPlus></Slot>
      <Spacer />
      <Ctl><Slot $w={46}><Minus c="#8b8b8b" /></Slot><Slot $w={45}><S w={10} c="#8b8b8b"><rect x=".5" y=".5" width="9" height="9" rx="1" /></S></Slot><Slot $w={46}><Cross z={10} c="#8b8b8b" /></Slot></Ctl>
    </NpTitle>
    <NpMenu>
      <Label w={49} s={13}>Arquivo</Label><Gap $w={28} /><Label w={36} s={13}>Editar</Label><Gap $w={28} /><Label w={34} s={13}>Exibir</Label>
      <Spacer />
      <S w={16} c="#333"><path d="M6.600 .9H9.400L9.900 2.900L11.300 3.700L13.300 3.100L14.700 5.500L13.200 7V9L14.700 10.500L13.300 12.900L11.300 12.300L9.900 13.100L9.400 15.100H6.600L6.100 13.100L4.700 12.300L2.700 12.900L1.300 10.500L2.800 9V7L1.300 5.500L2.700 3.100L4.700 3.700L6.100 2.900Z" /><circle cx="8" cy="8" r="2" /></S>
      <Gap $w={15} />
    </NpMenu>
    <Body>{LINES.map((l, i) => <Line key={i}>{l}</Line>)}</Body>
    <NpStatus>
      <Label w={66}>Ln 16, Col 47</Label><Spacer />
      <NpCell $w={88}><Label w={28}>100%</Label></NpCell>
      <NpCell $w={160}><Label w={87}>Windows (CRLF)</Label></NpCell>
      <NpCell $w={130}><Label w={32}>UTF-8</Label></NpCell>
    </NpStatus>
  </Notepad>
);

/* ---------- toast ---------- */
const Toast = styled.aside`position: absolute; left: 1486px; top: 896px; width: 422px; height: 124px; background: #009cd8; color: #fff; padding: 13px 0 0 14px; font-family: "Liberation Sans", Arial, sans-serif;`;
const ToastHead = styled.div`display: flex; align-items: center; height: 18px;`;
const ToastText = styled.div`margin-top: 17px; height: 45px; display: flex; flex-direction: column;`;
const ToastLine = styled.div`display: flex; justify-content: space-between; width: ${p => p.$w}px; height: 15px;`;
const ToastFoot = styled.div`display: flex; align-items: center; margin-top: 1px; height: 18px;`;
const Bar = styled.div`width: 236px; height: 9px; background: #e6e6e6; border: 1px solid #bcbcbc; margin: 3px 0 0 1px; flex: none;`;
const Fill = styled.div`height: 100%; background: #06b025;`;

const ToastBox = () => (
  <Toast>
    <ToastHead><Label w={95} s={13} b={700}>AcessoCliente</Label><Gap $w={291} /><Label w={5.500} s={10} b={700}>x</Label></ToastHead>
    <ToastText>
      <ToastLine $w={351}>
        <Label w={71} s={12.600} lh={15}>Trabalhando</Label><Label w={14} s={12.600} lh={15}>no</Label><Label w={115} s={12.600} lh={15}>39.292.853/0001-80</Label>
        <Label w={4} s={12.600} lh={15}>-</Label><Label w={27} s={12.600} lh={15}>EBC</Label><Label w={93} s={12.600} lh={15}>ENCOMENDAS</Label>
      </ToastLine>
      <Label w={58} s={12.600} lh={15}>LTDA (85)</Label>
    </ToastText>
    <ToastFoot><Bar><Fill style={{ width: '31%' }} /></Bar><Gap $w={50} /><Label w={22} s={11.500}>31%</Label><Gap $w={35} /><Label w={41} s={11.500}>12:18:54</Label></ToastFoot>
  </Toast>
);

export default function App() {
  return (
    <>
      <Global />
      <Desktop>
        <LeftScreen>
          <ExplorerWindow />
          <Taskbar />
          <ContextMenu />
        </LeftScreen>
        <RightScreen>
          <Chrome />
          <Page />
          <Taskbar tray />
          <NotepadWindow />
          <Bubble><Label w={207}>Aguardando nfse-cascavel.atende.net...</Label></Bubble>
          <ToastBox />
        </RightScreen>
      </Desktop>
    </>
  );
}
